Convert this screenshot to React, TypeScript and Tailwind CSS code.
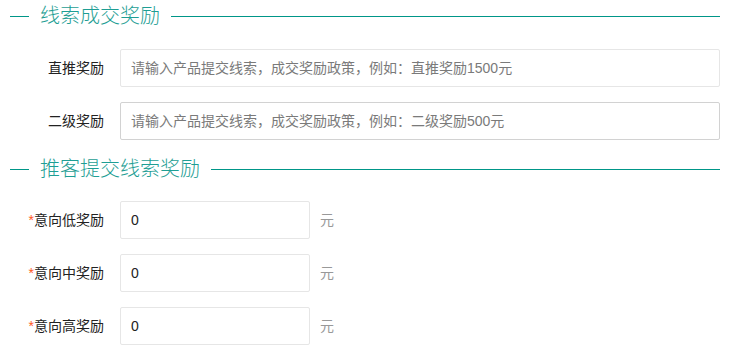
import React from 'react';

const font = '"Helvetica Neue", "Liberation Sans", "Noto Sans CJK SC", sans-serif';

const SectionTitle: React.FC<{ title: string }> = ({ title }) => (
  <div className="flex items-center h-8">
    <div className="w-[19px] h-px bg-[#009688]" />
    <span className="px-[11px] text-[20px] leading-8 font-light text-[#1e9e94] whitespace-nowrap">{title}</span>
    <div className="flex-1 h-px bg-[#009688]" />
  </div>
);

const Row: React.FC<{ label: string; required?: boolean; children: React.ReactNode }> = ({ label, required, children }) => (
  <div className="flex items-center h-[38px]">
    <label className="w-[94px] text-right text-sm text-[#222]">
      {required && <span className="text-[#ff5722]">*</span>}
      {label}
    </label>
    <div className="ml-4 flex items-center">{children}</div>
  </div>
);

export default function App() {
  const money = ['意向低奖励', '意向中奖励', '意向高奖励'];
  return (
    <div className="bg-white w-[733px] h-[354px] overflow-hidden" style={{ fontFamily: font }}>
      <div className="ml-[10px] w-[710px]">
        <SectionTitle title="线索成交奖励" />
        <div className="flex flex-col gap-[15px] pt-[17px]">
          <Row label="直推奖励">
            <input
              className="w-[600px] h-[38px] px-[10px] border border-[#e6e6e6] rounded-[2px] text-sm text-[#333] placeholder:text-[#7a7a7a] outline-none"
              placeholder="请输入产品提交线索，成交奖励政策，例如：直推奖励1500元"
            />
          </Row>
          <Row label="二级奖励">
            <input
              className="w-[600px] h-[38px] px-[10px] border border-[#d2d2d2] rounded-[2px] text-sm text-[#333] placeholder:text-[#7a7a7a] outline-none"
              placeholder="请输入产品提交线索，成交奖励政策，例如：二级奖励500元"
            />
          </Row>
        </div>
        <div className="mt-[13px]">
          <SectionTitle title="推客提交线索奖励" />
        </div>
        <div className="flex flex-col gap-[15px] pt-4">
          {money.map((m) => (
            <Row key={m} label={m} required>
              <input
                className="w-[190px] h-[38px] px-[10px] border border-[#e6e6e6] rounded-[2px] text-sm text-[#222] outline-none"
                defaultValue="0"
              />
              <span className="ml-[10px] text-sm text-[#999]">元</span>
            </Row>
          ))}
        </div>
      </div>
    </div>
  );
}
